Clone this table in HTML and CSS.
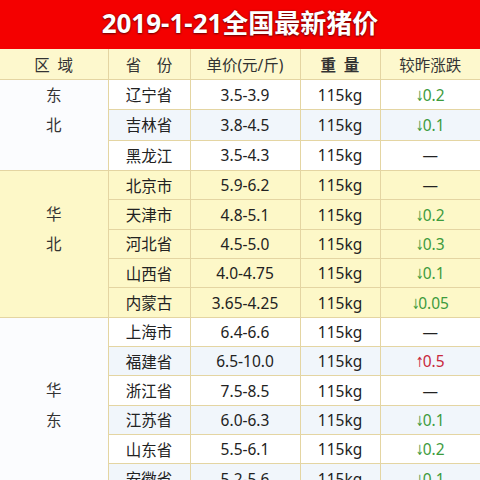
FILE: index.html
```html
<!DOCTYPE html>
<html lang="zh">
<head>
<meta charset="utf-8">
<link rel="stylesheet" href="styles.css">
</head>
<body>
<div class="title">2019-1-21全国最新猪价</div>
<table class="prices">
  <colgroup>
    <col class="c1"><col class="c2"><col class="c3"><col class="c4"><col class="c5">
  </colgroup>
  <thead>
    <tr class="head">
      <th>区&#8194;域</th><th>省&#12288;份</th><th>单价(元/斤)</th><th class="bold">重&#8194;量</th><th>较昨涨跌</th>
    </tr>
  </thead>
  <tbody class="white">
    <tr><td class="region" rowspan="3">东<br>北<br>&nbsp;</td><td>辽宁省</td><td>3.5-3.9</td><td>115kg</td><td class="down"><span class="arr">↓</span>0.2</td></tr>
    <tr class="alt"><td>吉林省</td><td>3.8-4.5</td><td>115kg</td><td class="down"><span class="arr">↓</span>0.1</td></tr>
    <tr><td>黑龙江</td><td>3.5-4.3</td><td>115kg</td><td>—</td></tr>
  </tbody>
  <tbody class="yellow">
    <tr><td class="region" rowspan="5">华<br>北<br>&nbsp;</td><td>北京市</td><td>5.9-6.2</td><td>115kg</td><td>—</td></tr>
    <tr><td>天津市</td><td>4.8-5.1</td><td>115kg</td><td class="down"><span class="arr">↓</span>0.2</td></tr>
    <tr><td>河北省</td><td>4.5-5.0</td><td>115kg</td><td class="down"><span class="arr">↓</span>0.3</td></tr>
    <tr><td>山西省</td><td>4.0-4.75</td><td>115kg</td><td class="down"><span class="arr">↓</span>0.1</td></tr>
    <tr><td>内蒙古</td><td>3.65-4.25</td><td>115kg</td><td class="down"><span class="arr">↓</span>0.05</td></tr>
  </tbody>
  <tbody class="white">
    <tr><td class="region" rowspan="7">华<br>东<br>&nbsp;</td><td>上海市</td><td>6.4-6.6</td><td>115kg</td><td>—</td></tr>
    <tr class="alt"><td>福建省</td><td>6.5-10.0</td><td>115kg</td><td class="up"><span class="arr">↑</span>0.5</td></tr>
    <tr><td>浙江省</td><td>7.5-8.5</td><td>115kg</td><td>—</td></tr>
    <tr class="alt"><td>江苏省</td><td>6.0-6.3</td><td>115kg</td><td class="down"><span class="arr">↓</span>0.1</td></tr>
    <tr><td>山东省</td><td>5.5-6.1</td><td>115kg</td><td class="down"><span class="arr">↓</span>0.2</td></tr>
    <tr class="alt"><td>安徽省</td><td>5.2-5.6</td><td>115kg</td><td class="down"><span class="arr">↓</span>0.1</td></tr>
    <tr><td>江西省</td><td>5.8-6.2</td><td>115kg</td><td class="down"><span class="arr">↓</span>0.1</td></tr>
  </tbody>
</table>
</body>
</html>
```

FILE: styles.css
```css
html, body {
  margin: 0;
  padding: 0;
  width: 480px;
  height: 480px;
  overflow: hidden;
  background: #ffffff;
}
body {
  font-family: "Noto Sans", "Noto Sans CJK SC", sans-serif;
  color: #222222;
}
.title {
  height: 49px;
  background: #f40000;
  color: #ffffff;
  font-weight: bold;
  font-size: 26px;
  line-height: 47px;
  text-align: center;
  text-shadow: 0 1px 2px rgba(90, 0, 0, 0.8), 0 0 2px rgba(90, 0, 0, 0.6);
  box-sizing: border-box;
}
.prices {
  width: 480px;
  table-layout: fixed;
  border-collapse: collapse;
  font-size: 15.5px;
}
.c1 { width: 108px; }
.c2 { width: 82px; }
.c3 { width: 110px; }
.c4 { width: 80px; }
.c5 { width: 100px; }
.prices th, .prices td {
  padding: 0;
  text-align: center;
  vertical-align: middle;
  border: 1px solid #e4d5a2;
  white-space: nowrap;
}
.prices tr > *:first-child { border-left: none; }
.prices tr > *:last-child { border-right: none; }
.prices td.region { border-left: none; }
.head th {
  height: 30px;
  background: #fdf8cd;
  font-weight: normal;
  color: #333333;
  border-top: none;
}
.head th.bold { font-weight: bold; }
.prices tbody tr { height: 29.35px; }
.white td { background: #ffffff; }
.white tr.alt td { background: #f1f6fb; }
.white td.region { background: #fbfcfe; }
.yellow td { background: #fdf8c8; }
.region {
  line-height: 30px;
  color: #333333;
}
.down { color: #3d9b3d; }
.up { color: #c8283c; }
.arr {
  display: inline-block;
  font-family: "DejaVu Sans", sans-serif;
  font-size: 14px;
  transform: scaleX(0.7);
  margin: 0 -3px 0 -2px;
}
```
